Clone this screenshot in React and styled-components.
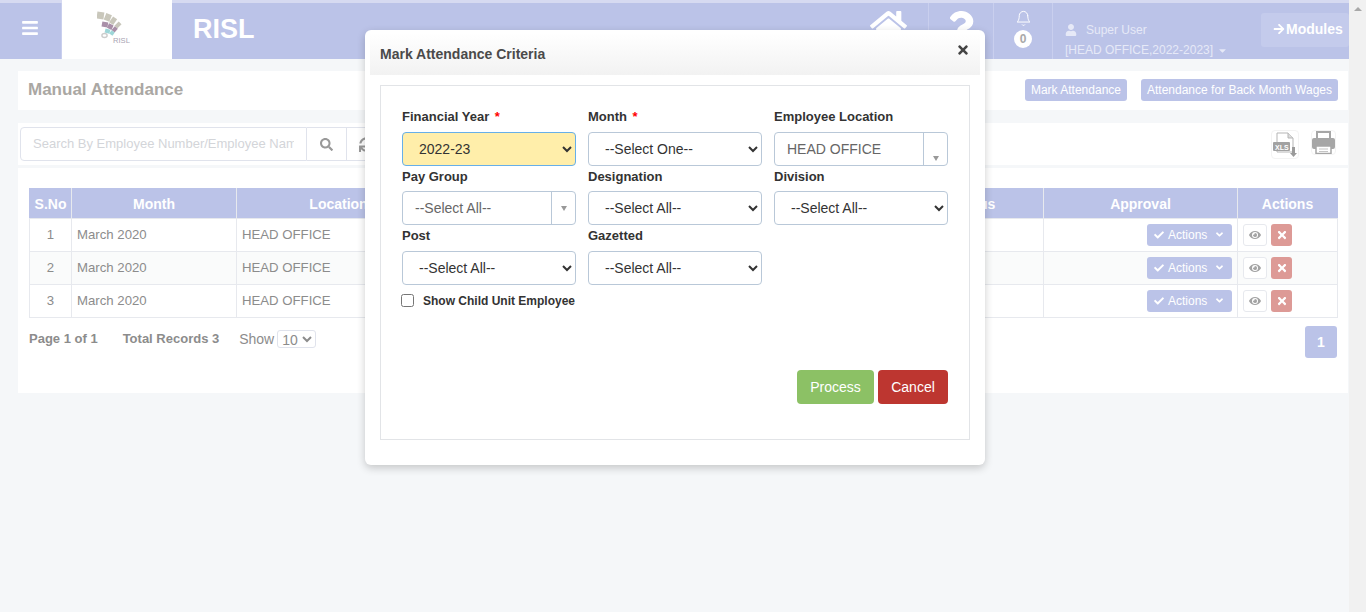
import React from 'react'
import styled, { createGlobalStyle } from 'styled-components'
import {
  FaAngleDown,
  FaArrowRight,
  FaBars,
  FaCaretDown,
  FaCheck,
  FaEye,
  FaHome,
  FaQuestion,
  FaSearch,
  FaSync,
  FaTimes,
  FaUser,
} from 'react-icons/fa'
import { FiBell } from 'react-icons/fi'

const PERIWINKLE = '#bbc3e8'

const rows = [1, 2, 3]

const GlobalStyle = createGlobalStyle`
  html, body {
    margin: 0;
    padding: 0;
    height: 100%;
    overflow: hidden;
    background: #f5f7f9;
    font-family: "Liberation Sans", Arial, sans-serif;
  }
  * {
    box-sizing: border-box;
  }
`

const Logo = () => (
  <svg width="34" height="34" viewBox="97 10 34 34">
    <g fill="#c9c7bb">
      <rect x="97" y="12" width="7" height="7" transform="rotate(8 100 15)" />
      <rect x="105" y="14" width="6" height="7" transform="rotate(22 108 17)" />
      <rect x="111" y="17" width="5" height="7" transform="rotate(35 113 20)" />
      <rect x="116" y="22" width="4" height="6" transform="rotate(45 118 25)" />
    </g>
    <g fill="#a98fa8">
      <rect x="102" y="22" width="6" height="5" transform="rotate(10 105 24)" />
      <rect x="108" y="24" width="5" height="5" transform="rotate(25 110 26)" />
      <rect x="113" y="27" width="4" height="5" transform="rotate(40 115 29)" />
    </g>
    <g fill="#9ed6d8">
      <rect x="105" y="29" width="5" height="4" transform="rotate(15 107 31)" />
      <rect x="110" y="31" width="4" height="4" transform="rotate(35 112 33)" />
    </g>
    <ellipse cx="104.5" cy="35.5" rx="2.6" ry="2" fill="none" stroke="#ccc" strokeWidth="1.4" />
    <text x="113" y="43" fontSize="7.6" fill="#a8a3b2" fontFamily="Liberation Sans, sans-serif">
      RISL
    </text>
  </svg>
)

const XlsIcon = () => (
  <svg width="24" height="26" viewBox="0 0 24 26">
    <path d="M4 1h11l5 5v14H4z" fill="#fff" stroke="#b5b5b5" strokeWidth="1" />
    <path d="M15 1v5h5" fill="#ddd" stroke="#b5b5b5" strokeWidth="1" />
    <rect x="0" y="10" width="17" height="9" rx="1" fill="#a2a2a2" />
    <text x="2" y="17.5" fontSize="7" fontWeight="700" fill="#fff" fontFamily="Liberation Sans, sans-serif">
      XLS
    </text>
    <path d="M19 15h3v6h2l-3.5 4-3.5-4h2z" fill="#9a9a9a" />
  </svg>
)

const PrintIcon = () => (
  <svg width="23" height="23" viewBox="0 0 23 23">
    <path d="M5 8V1h13v7" fill="#fff" stroke="#a6a6a6" strokeWidth="2" />
    <rect x="0" y="7" width="23" height="11" rx="2" fill="#a6a6a6" />
    <rect x="4" y="15" width="15" height="7.5" fill="#fff" stroke="#a6a6a6" strokeWidth="1.5" />
    <path d="M7 18h9M7 20.5h9" stroke="#c4c4c4" strokeWidth="1" />
  </svg>
)

const App = () => (
  <>
    <GlobalStyle />
    <Page>
      <Main>
        <TopBar>
          <MenuCell>
            <FaBars size={18} />
          </MenuCell>
          <LogoCell>
            <Logo />
          </LogoCell>
          <Brand>RISL</Brand>
          <HomeCell>
            <FaHome size={37} />
          </HomeCell>
          <NavCell>
            <FaQuestion size={34} />
          </NavCell>
          <BellCell>
            <FiBell size={17} strokeWidth={1.4} />
            <Badge>0</Badge>
          </BellCell>
          <UserCell>
            <UserName>
              <FaUser size={12} />
              <span>Super User</span>
            </UserName>
            <UserUnit>
              [HEAD OFFICE,2022-2023]
              <FaCaretDown size={11} />
            </UserUnit>
          </UserCell>
          <ModulesButton>
            <FaArrowRight size={12} />
            Modules
          </ModulesButton>
        </TopBar>

        <TitleCard>
          <PageTitle>Manual Attendance</PageTitle>
          <TitleActions>
            <LinkButton>Mark Attendance</LinkButton>
            <LinkButton>Attendance for Back Month Wages</LinkButton>
          </TitleActions>
        </TitleCard>

        <ToolCard>
          <SearchInput placeholder="Search By Employee Number/Employee Name" readOnly />
          <SearchAddon>
            <FaSearch size={13} />
          </SearchAddon>
          <SearchAddon>
            <FaSync size={15} />
          </SearchAddon>
          <ToolIcons>
            <ToolIcon $width={28} $height={29}>
              <XlsIcon />
            </ToolIcon>
            <ToolIcon $width={25} $height={25}>
              <PrintIcon />
            </ToolIcon>
          </ToolIcons>
        </ToolCard>

        <TableCard>
          <Table>
            <colgroup>
              <col width="42" />
              <col width="165" />
              <col width="204" />
              <col width="464" />
              <col width="139" />
              <col width="194" />
              <col width="100" />
            </colgroup>
            <thead>
              <tr>
                <Th>S.No</Th>
                <Th>Month</Th>
                <Th>Location</Th>
                <Th />
                <Th>Status</Th>
                <Th>Approval</Th>
                <Th>Actions</Th>
              </tr>
            </thead>
            <tbody>
              {rows.map((n) => (
                <Row key={n}>
                  <Td $center>{n}</Td>
                  <Td>March 2020</Td>
                  <Td>HEAD OFFICE</Td>
                  <Td />
                  <Td />
                  <Td>
                    <ApprovalCell>
                      <ActionsButton>
                        <FaCheck size={10} />
                        <span>Actions</span>
                        <FaAngleDown size={11} />
                      </ActionsButton>
                    </ApprovalCell>
                  </Td>
                  <Td>
                    <RowButtons>
                      <ViewButton>
                        <FaEye size={12} />
                      </ViewButton>
                      <DeleteButton>
                        <FaTimes size={12} />
                      </DeleteButton>
                    </RowButtons>
                  </Td>
                </Row>
              ))}
            </tbody>
          </Table>
          <Pagination>
            <PageInfo>
              <span>Page 1 of 1</span>
              <span>Total Records 3</span>
            </PageInfo>
            <ShowLabel>Show</ShowLabel>
            <PageSize defaultValue="10">
              <option>10</option>
            </PageSize>
            <PageNumber>1</PageNumber>
          </Pagination>
        </TableCard>
      </Main>

      <ScrollRail>
        <ScrollArrow />
      </ScrollRail>

      <Modal>
        <ModalHeader>
          <ModalTitle>Mark Attendance Criteria</ModalTitle>
          <CloseButton>
            <FaTimes size={14} />
          </CloseButton>
        </ModalHeader>
        <ModalPanel>
          <FormGrid>
            <Field>
              <FieldLabel>
                Financial Year <Required>*</Required>
              </FieldLabel>
              <Select $highlight defaultValue="2022-23">
                <option>2022-23</option>
              </Select>
            </Field>
            <Field>
              <FieldLabel>
                Month <Required>*</Required>
              </FieldLabel>
              <Select defaultValue="--Select One--">
                <option>--Select One--</option>
              </Select>
            </Field>
            <Field>
              <FieldLabel>Employee Location</FieldLabel>
              <Combo>
                <ComboText>HEAD OFFICE</ComboText>
                <ComboArrow $low>
                  <ComboCaret />
                </ComboArrow>
              </Combo>
            </Field>
            <Field>
              <FieldLabel>Pay Group</FieldLabel>
              <Combo>
                <ComboText>--Select All--</ComboText>
                <ComboArrow>
                  <ComboCaret />
                </ComboArrow>
              </Combo>
            </Field>
            <Field>
              <FieldLabel>Designation</FieldLabel>
              <Select defaultValue="--Select All--">
                <option>--Select All--</option>
              </Select>
            </Field>
            <Field>
              <FieldLabel>Division</FieldLabel>
              <Select defaultValue="--Select All--">
                <option>--Select All--</option>
              </Select>
            </Field>
            <Field>
              <FieldLabel>Post</FieldLabel>
              <Select defaultValue="--Select All--">
                <option>--Select All--</option>
              </Select>
            </Field>
            <Field>
              <FieldLabel>Gazetted</FieldLabel>
              <Select defaultValue="--Select All--">
                <option>--Select All--</option>
              </Select>
            </Field>
          </FormGrid>
          <CheckRow>
            <Checkbox type="checkbox" readOnly />
            Show Child Unit Employee
          </CheckRow>
          <FormButtons>
            <FormButton $color="#8cc165" $width={77}>
              Process
            </FormButton>
            <FormButton $color="#bd3630" $width={70}>
              Cancel
            </FormButton>
          </FormButtons>
        </ModalPanel>
      </Modal>
    </Page>
  </>
)

const Page = styled.div`
  position: relative;
  display: flex;
  width: 100%;
  height: 612px;
  overflow: hidden;
`

const Main = styled.div`
  flex: 1;
  min-width: 0;
`

const ScrollRail = styled.div`
  width: 17px;
  background: #f1f1f1;
  display: flex;
  justify-content: center;
  padding-top: 7px;
`

const ScrollArrow = styled.div`
  width: 0;
  height: 0;
  border-left: 4px solid transparent;
  border-right: 4px solid transparent;
  border-bottom: 4px solid #a8a8a8;
`

const TopBar = styled.header`
  display: flex;
  align-items: stretch;
  height: 59px;
  background: ${PERIWINKLE};
  border-top: 3px solid #d6daf1;
  color: #fff;
`

const MenuCell = styled.div`
  width: 62px;
  display: flex;
  align-items: center;
  justify-content: center;
  padding: 0 2px 6px 0;
  border-right: 1px solid #c9cfee;
`

const LogoCell = styled.div`
  width: 110px;
  margin-top: -3px;
  background: #fff;
  display: flex;
  align-items: flex-start;
  padding: 10px 0 0 35px;
`

const Brand = styled.div`
  flex: 1;
  padding: 10px 0 0 21px;
  font-size: 27px;
  line-height: 32px;
  font-weight: 700;
`

const NavCell = styled.div`
  width: 65px;
  display: flex;
  justify-content: center;
  padding-top: 8px;
  border-right: 1px solid #c9cfee;
`

const HomeCell = styled(NavCell)`
  width: 64px;
  padding: 4px 16px 0 0;
`

const BellCell = styled.div`
  width: 59px;
  display: flex;
  flex-direction: column;
  align-items: center;
  gap: 3px;
  padding: 7px 0 0 0;
  border-right: 1px solid #c9cfee;
`

const Badge = styled.div`
  width: 18px;
  height: 18px;
  border-radius: 50%;
  background: #fff;
  color: #a9a9a9;
  font-size: 12px;
  font-weight: 700;
  line-height: 18px;
  text-align: center;
`

const UserCell = styled.div`
  width: 208px;
  padding: 19px 0 0 12px;
  font-size: 12px;
  color: #e6e9f7;
`

const UserName = styled.div`
  display: flex;
  align-items: center;
  gap: 9px;
  height: 16px;
`

const UserUnit = styled.div`
  display: flex;
  align-items: center;
  gap: 4px;
  margin-top: 4px;
  height: 16px;
  white-space: nowrap;
`

const ModulesButton = styled.div`
  width: 88px;
  height: 34px;
  margin-top: 10px;
  padding: 0 0 2px 12px;
  display: flex;
  align-items: center;
  gap: 1px;
  background: #c4cbec;
  border-radius: 3px;
  font-size: 14px;
  font-weight: 700;
  white-space: nowrap;
`

const TitleCard = styled.section`
  display: flex;
  align-items: center;
  justify-content: space-between;
  height: 39px;
  margin: 12px 1px 0 18px;
  padding: 0 10px 1px;
  background: #fff;
`

const PageTitle = styled.h1`
  margin: 0;
  font-size: 17px;
  font-weight: 700;
  color: #aaa7a3;
`

const TitleActions = styled.div`
  display: flex;
  gap: 14px;
`

const LinkButton = styled.div`
  height: 22px;
  padding: 0 6px;
  background: ${PERIWINKLE};
  border-radius: 3px;
  color: #fff;
  font-size: 12px;
  line-height: 22px;
`

const ToolCard = styled.section`
  display: flex;
  align-items: center;
  height: 42px;
  margin: 13px 1px 0 18px;
  padding: 0 12px 0 2px;
  background: #fff;
`

const SearchInput = styled.input`
  width: 287px;
  height: 34px;
  padding: 0 12px 2px;
  border: 1px solid #e0e3ec;
  border-radius: 4px 0 0 4px;
  font-family: inherit;
  font-size: 13px;
  outline: none;
  &::placeholder {
    color: #d3d5d9;
  }
`

const SearchAddon = styled.div`
  width: 40px;
  height: 34px;
  display: flex;
  align-items: center;
  justify-content: center;
  border: 1px solid #e0e3ec;
  border-left: 0;
  color: #999;
`

const ToolIcons = styled.div`
  margin-left: auto;
  display: flex;
  align-items: flex-start;
  align-self: flex-start;
  gap: 12px;
  padding-top: 7px;
`

const ToolIcon = styled.div`
  width: ${(props) => props.$width}px;
  height: ${(props) => props.$height}px;
  display: flex;
  align-items: center;
  justify-content: center;
  border: 1px solid #f3f3f3;
  border-radius: 4px;
  color: #a6a6a6;
`

const TableCard = styled.section`
  height: 225px;
  margin: 3px 1px 0 18px;
  padding: 20px 10px 0 11px;
  background: #fff;
`

const Table = styled.table`
  width: 1308px;
  table-layout: fixed;
  border-collapse: collapse;
  font-size: 13.2px;
`

const Th = styled.th`
  height: 30px;
  padding: 0;
  background: ${PERIWINKLE};
  border: 1px solid #e7e9ee;
  border-top-color: ${PERIWINKLE};
  color: #fff;
  font-size: 14px;
  font-weight: 700;
  text-align: center;
  &:first-child {
    border-left-color: ${PERIWINKLE};
  }
  &:last-child {
    border-right-color: ${PERIWINKLE};
  }
`

const Row = styled.tr`
  &:nth-child(even) {
    background: #fafbfb;
  }
`

const Td = styled.td`
  height: 33px;
  padding: 0 5px 1px;
  border: 1px solid #e7e9ee;
  color: #8c8c8c;
  text-align: ${(props) => (props.$center ? 'center' : 'left')};
`

const ApprovalCell = styled.div`
  display: flex;
  justify-content: flex-end;
`

const ActionsButton = styled.div`
  width: 85px;
  height: 22px;
  display: flex;
  align-items: center;
  gap: 4px;
  padding-left: 7px;
  background: ${PERIWINKLE};
  border-radius: 3px;
  color: #fff;
  font-size: 12px;
  & svg:last-child {
    margin-left: 3px;
  }
`

const RowButtons = styled.div`
  display: flex;
  gap: 4px;
`

const ViewButton = styled.div`
  width: 24px;
  height: 22px;
  display: flex;
  align-items: center;
  justify-content: center;
  border: 1px solid #e7e9ee;
  border-radius: 3px;
  background: #fff;
  color: #a3a3a3;
`

const DeleteButton = styled.div`
  width: 21px;
  height: 22px;
  display: flex;
  align-items: center;
  justify-content: center;
  border-radius: 3px;
  background: #dd9a96;
  color: #fff;
`

const Pagination = styled.div`
  display: flex;
  align-items: flex-start;
  margin: 8px 1px 0 0;
  font-size: 14px;
  color: #8c8c8c;
`

const PageInfo = styled.div`
  display: flex;
  gap: 25px;
  padding-top: 5px;
  line-height: 16px;
  font-weight: 700;
  font-size: 13px;
`

const ShowLabel = styled.span`
  margin: 5px 3px 0 20px;
  line-height: 16px;
`

const PageSize = styled.select`
  width: 39px;
  height: 18px;
  margin-top: 4px;
  padding: 0;
  border: 1px solid #e0e3ec;
  border-radius: 3px;
  background: #fff;
  color: #8c8c8c;
  font-family: inherit;
  font-size: 14px;
`

const PageNumber = styled.div`
  width: 32px;
  height: 32px;
  margin-left: auto;
  background: ${PERIWINKLE};
  border-radius: 3px;
  color: #fff;
  font-weight: 700;
  line-height: 32px;
  text-align: center;
`

const Modal = styled.div`
  position: absolute;
  left: 365px;
  top: 30px;
  width: 620px;
  height: 435px;
  padding: 3px 5px 0;
  background: #fff;
  border-radius: 6px;
  box-shadow: 0 3px 9px rgba(0, 0, 0, 0.2);
`

const ModalHeader = styled.div`
  display: flex;
  align-items: center;
  justify-content: space-between;
  height: 42px;
  padding: 0 10px 0 10px;
  background: linear-gradient(#ffffff, #f2f2f2);
`

const ModalTitle = styled.h4`
  margin: 0;
  font-size: 14px;
  font-weight: 700;
  color: #4a4a4a;
`

const CloseButton = styled.div`
  display: flex;
  margin-bottom: 8px;
  color: #444;
`

const ModalPanel = styled.div`
  height: 355px;
  margin: 10px 10px 0;
  padding: 20.4px 21px 0;
  border: 1px solid #e2e4e7;
`

const FormGrid = styled.div`
  display: grid;
  grid-template-columns: repeat(3, 174px);
  column-gap: 12px;
`

const Field = styled.div`
  display: flex;
  flex-direction: column;
`

const FieldLabel = styled.label`
  height: 25.5px;
  padding-top: 3px;
  font-size: 13px;
  line-height: 16px;
  font-weight: 700;
  color: #333;
  white-space: nowrap;
`

const Required = styled.span`
  margin-left: 2px;
  color: #f00;
`

const Select = styled.select`
  width: 174px;
  height: 34px;
  padding: 0 8px 0 12px;
  border: 1px solid ${(props) => (props.$highlight ? '#66afe9' : '#b9c8d8')};
  border-radius: 4px;
  background: ${(props) => (props.$highlight ? '#ffeeaa' : '#fff')};
  color: #333;
  font-family: inherit;
  font-size: 14px;
`

const Combo = styled.div`
  display: flex;
  height: 34px;
  border: 1px solid #b9c8d8;
  border-radius: 4px;
  background: #fff;
`

const ComboText = styled.div`
  flex: 1;
  padding-left: 12px;
  color: #666;
  font-size: 14px;
  line-height: 32px;
`

const ComboArrow = styled.div`
  width: 24px;
  display: flex;
  justify-content: center;
  padding-top: ${(props) => (props.$low ? '23px' : '14px')};
  border-left: 1px solid #b9c8d8;
`

const ComboCaret = styled.div`
  width: 0;
  height: 0;
  border-left: 3.5px solid transparent;
  border-right: 3.5px solid transparent;
  border-top: 5px solid #999;
`

const CheckRow = styled.label`
  display: flex;
  align-items: center;
  height: 14px;
  margin: 9px 0 0 -1px;
  font-size: 12px;
  font-weight: 700;
  color: #333;
`

const Checkbox = styled.input`
  width: 13px;
  height: 13px;
  margin: 0 9px 0 0;
`

const FormButtons = styled.div`
  display: flex;
  justify-content: flex-end;
  gap: 4px;
  margin-top: 62px;
`

const FormButton = styled.div`
  width: ${(props) => props.$width}px;
  height: 34px;
  background: ${(props) => props.$color};
  border-radius: 4px;
  color: #fff;
  font-size: 14px;
  line-height: 34px;
  text-align: center;
`

export default App
